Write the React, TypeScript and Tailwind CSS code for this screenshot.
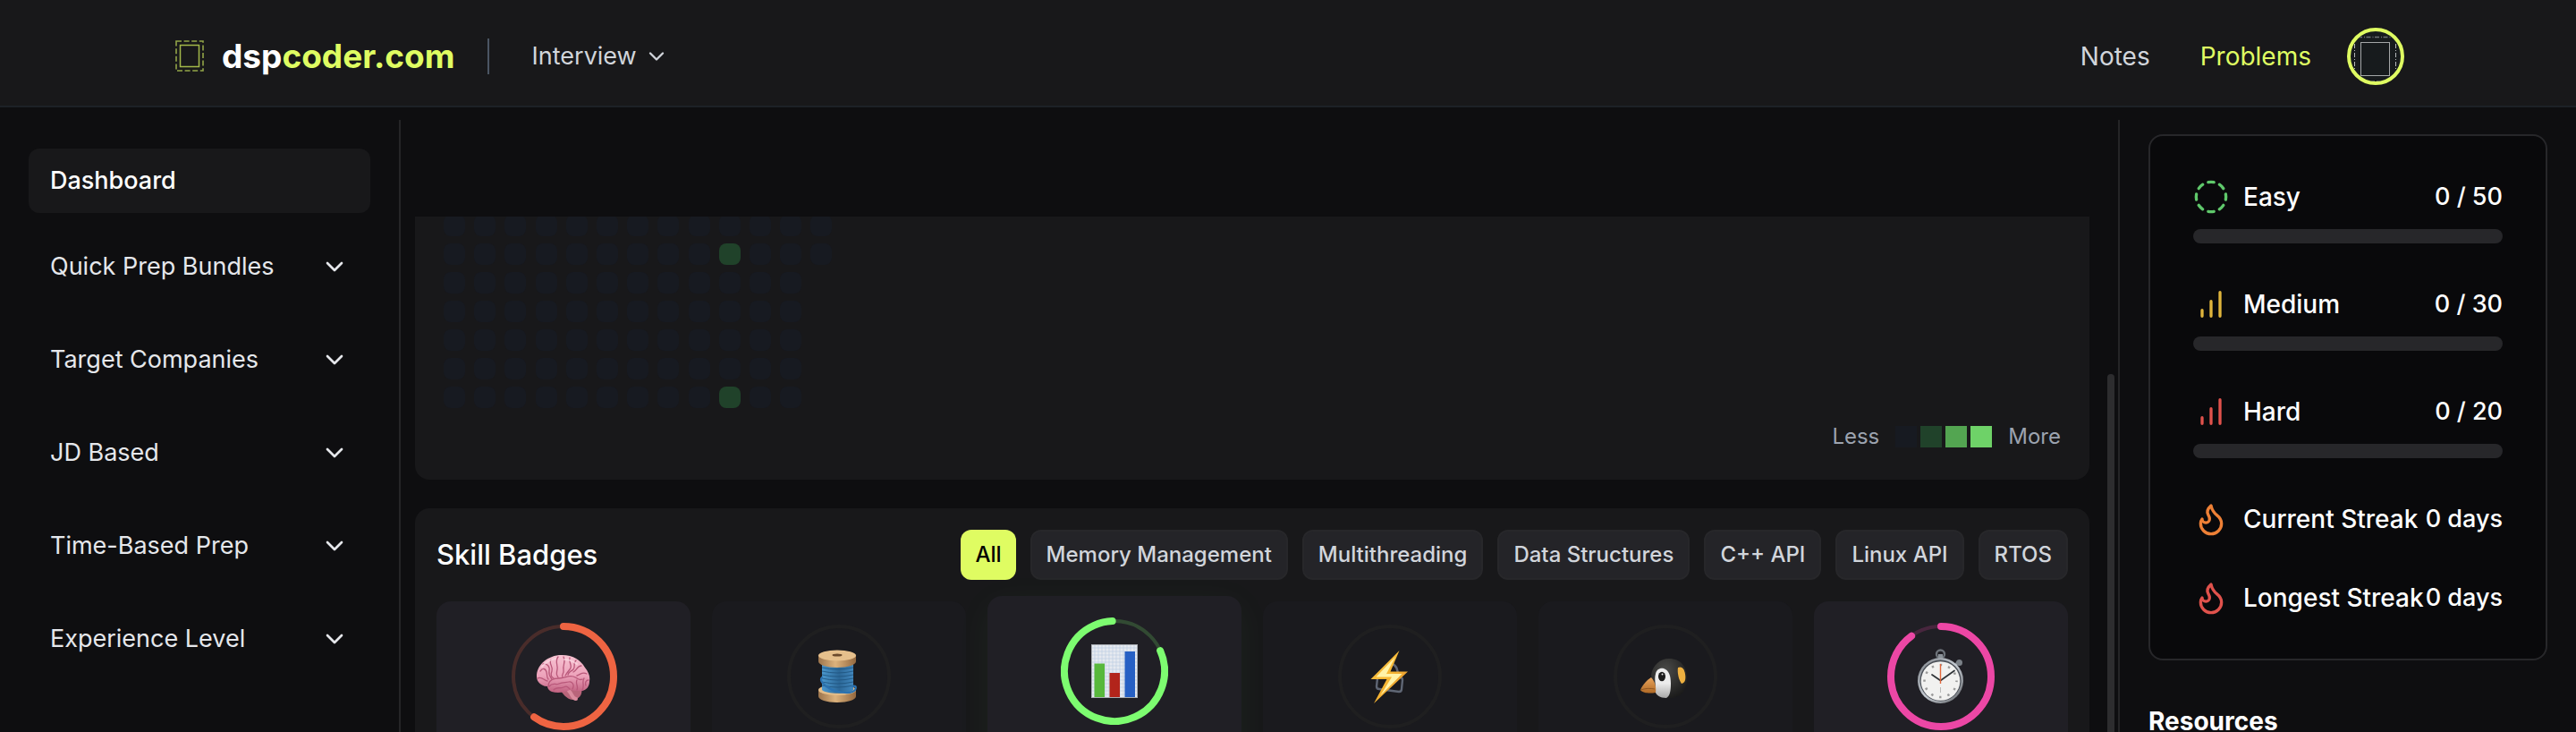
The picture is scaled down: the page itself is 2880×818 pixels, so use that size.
import type { ReactNode } from "react";

const navSections = [
  "Quick Prep Bundles",
  "Target Companies",
  "JD Based",
  "Time-Based Prep",
  "Experience Level",
];

const filters = [
  "All",
  "Memory Management",
  "Multithreading",
  "Data Structures",
  "C++ API",
  "Linux API",
  "RTOS",
];

function ChevronDown({ className }: { className: string }) {
  return (
    <svg viewBox="0 0 24 24" fill="none" stroke="currentColor" strokeWidth="2" strokeLinecap="round" strokeLinejoin="round" className={className} aria-hidden="true">
      <path d="m6 9 6 6 6-6" />
    </svg>
  );
}

function LogoMark() {
  return (
    <svg width="32" height="36" viewBox="0 0 32 36" fill="none" stroke="#a3b84a" aria-hidden="true">
      <rect x="1" y="1" width="30" height="33" strokeWidth="1.6" strokeDasharray="6 2.6" stroke="#93a548" />
      <rect x="5.5" y="5.5" width="21" height="24" strokeWidth="1.5" />
    </svg>
  );
}

function AvatarMark() {
  return (
    <svg viewBox="0 0 56 56" className="size-full" fill="none" aria-hidden="true">
      <path d="M8 6.5h40" stroke="#6f7376" strokeWidth="1.6" strokeDasharray="5 2 1 1.5" />
      <path d="M4.5 14v30M50.5 14v30" stroke="#b5b8ba" strokeWidth="1" strokeDasharray="5 2 1 2" />
      <path d="M22 55.5h13" stroke="#6f7376" strokeWidth="1" strokeDasharray="5 2" />
      <rect x="11.5" y="12.5" width="32" height="37" stroke="#a4a7a8" />
    </svg>
  );
}

function CircleDashed() {
  return (
    <svg viewBox="0 0 24 24" fill="none" stroke="currentColor" strokeWidth="2" strokeLinecap="round" strokeLinejoin="round" className="size-10 shrink-0 text-[#5fc86b]" aria-hidden="true">
      <path d="M10.1 2.182a10 10 0 0 1 3.8 0" />
      <path d="M13.9 21.818a10 10 0 0 1-3.8 0" />
      <path d="M17.609 3.721a10 10 0 0 1 2.69 2.7" />
      <path d="M2.182 13.9a10 10 0 0 1 0-3.8" />
      <path d="M20.279 17.609a10 10 0 0 1-2.7 2.69" />
      <path d="M21.818 10.1a10 10 0 0 1 0 3.8" />
      <path d="M3.721 6.391a10 10 0 0 1 2.7-2.69" />
      <path d="M6.391 20.279a10 10 0 0 1-2.69-2.7" />
    </svg>
  );
}

function Bars({ className }: { className: string }) {
  return (
    <svg viewBox="0 0 24 24" fill="none" stroke="currentColor" strokeWidth="2" strokeLinecap="round" className={className} aria-hidden="true">
      <path d="M6 20v-4M12 20V10M18 20V4" />
    </svg>
  );
}

function Flame({ className }: { className: string }) {
  return (
    <svg viewBox="0 0 24 24" fill="none" stroke="currentColor" strokeWidth="2" strokeLinecap="round" strokeLinejoin="round" className={className} aria-hidden="true">
      <path d="M8.5 14.5A2.5 2.5 0 0 0 11 12c0-1.38-.5-2-1-3-1.072-2.143-.224-4.054 2-6 .5 2.5 2 4.9 4 6.5 2 1.6 3 3.5 3 5.5a7 7 0 1 1-14 0c0-1.153.433-2.294 1-3a2.5 2.5 0 0 0 2.5 2.5z" />
    </svg>
  );
}

function Brain() {
  return (
    <g>
      <defs>
        <linearGradient id="brain" x1="0" y1="0" x2="0" y2="1">
          <stop offset="0" stopColor="#f7c3d2" />
          <stop offset="0.55" stopColor="#eda3bb" />
          <stop offset="1" stopColor="#c0607f" />
        </linearGradient>
      </defs>
      <path d="M55 73c4 6 8 12 15 13 7 0 12-6 10-13l-8-6z" fill="#b9657a" />
      <path d="M66 76c4 4 4 9 8 9" stroke="#da8c9e" strokeWidth="4" fill="none" strokeLinecap="round" />
      <path d="M30 60c0-12 10-22 25-24 15-1 24 5 29 14 4 5 6 10 5 15 0 6-3 10-8 11-6 1-10-1-14-1-6 3-14 4-20 2-3-1-5-4-5-6-7 0-12-5-12-11z" fill="url(#brain)" />
      <g fill="none" stroke="#b9587a" strokeWidth="1.3" strokeLinecap="round">
        <path d="M34 54c3-4 6-3 7 1s0 6 2 8M37 46c5-1 8 3 7 8s2 7 3 9M46 41c-3 5 3 8 1 13s0 7 2 8M54 38c-4 5 0 9-1 14s-1 6 1 9M60 38c3 6-1 9 0 14s-3 6-1 9M67 39c-2 6 4 8 0 13s-3 4-5 7M74 42c-4 3 0 7-3 10s-5 2-6 6M80 48c-5 0-5 5-9 7M86 57c-5-3-7 1-11 2M31 62c5-3 7 3 11 3" />
        <path d="M43 71c0-7 5-9 12-9s10-4 16-2 6 5 10 3M44 71c4-5 7-1 11-3s8-1 11-2 7 3 4 8M49 75c3-4 7-1 11-3s5 0 7 2M75 64c-2 4 2 7 0 11M83 62c-3 4 1 8-2 13M88 64c-3 0-4 3-3 6" />
      </g>
      <path d="M36 49c4-5 9-8 15-9M61 41c5 0 10 2 14 5" stroke="#fbdbe4" strokeWidth="2" fill="none" strokeLinecap="round" opacity="0.7" />
    </g>
  );
}

function Spool() {
  return (
    <g>
      <defs>
        <linearGradient id="wood" x1="0" y1="0" x2="1" y2="0">
          <stop offset="0" stopColor="#9c744c" />
          <stop offset="0.45" stopColor="#dcb27c" />
          <stop offset="1" stopColor="#94683f" />
        </linearGradient>
        <linearGradient id="thread" x1="0" y1="0" x2="1" y2="0">
          <stop offset="0" stopColor="#4a97cd" />
          <stop offset="0.55" stopColor="#2c6898" />
          <stop offset="1" stopColor="#4187bd" />
        </linearGradient>
      </defs>
      <path d="M37 76c0-4 9-7 21-7s21 3 21 7v6c0 4-9 7-21 7s-21-3-21-7z" fill="url(#wood)" />
      <ellipse cx="58" cy="75" rx="21" ry="6" fill="#e3bd89" />
      <path d="M41 40h35v35c-5 5-30 5-35 0z" fill="url(#thread)" />
      <g stroke="#1e527d" strokeWidth="1" fill="none" opacity="0.8">
        <path d="M41 46q17 4 35 0M41 50q17 4 35 0M41 54q17 4 35 0M41 58q17 4 35 0M41 62q17 4 35 0M41 66q17 4 35 0M41 70q17 4 35 0" />
      </g>
      <path d="M41 61c-3 3 1 8 8 12s24 8 29 2c2-4 0-5-3-4" stroke="#2b72b0" strokeWidth="2.2" fill="none" strokeLinecap="round" />
      <path d="M37 37v6c0 4 9 7 21 7s21-3 21-7v-6z" fill="url(#wood)" />
      <ellipse cx="58" cy="36.5" rx="21" ry="6" fill="#e6c08c" />
      <ellipse cx="58" cy="36" rx="5.5" ry="1.5" fill="#6b4a2c" />
    </g>
  );
}

function ChartGlyph() {
  return (
    <g>
      <rect x="34" y="30" width="52" height="60" fill="#e6eaf0" />
      <path
        d="M34 34h52M34 38h52M34 42h52M34 46h52M34 50h52M34 54h52M34 58h52M34 62h52M34 66h52M34 70h52M34 74h52M34 78h52M34 82h52M34 86h52M38 30v60M42 30v60M46 30v60M50 30v60M54 30v60M58 30v60M62 30v60M66 30v60M70 30v60M74 30v60M78 30v60M82 30v60"
        stroke="#bccde2"
        strokeWidth="0.7"
      />
      <rect x="37.5" y="51.5" width="11.5" height="38.5" fill="#58b83c" />
      <rect x="54.5" y="62" width="11.5" height="28" fill="#b2241b" />
      <rect x="71.5" y="38" width="11.5" height="52" fill="#2760c4" />
      <rect x="34.5" y="30.5" width="51" height="59" fill="none" stroke="#a9adb3" />
    </g>
  );
}

function Bolt() {
  return (
    <g>
      <defs>
        <linearGradient id="bolt" x1="0" y1="0" x2="1" y2="1">
          <stop offset="0" stopColor="#f6c145" />
          <stop offset="0.5" stopColor="#f7b733" />
          <stop offset="1" stopColor="#d9822b" />
        </linearGradient>
      </defs>
      <g fill="none" stroke="#5f6674" strokeWidth="2.4" strokeLinecap="round" strokeLinejoin="round">
        <path d="M48 59l23 2c2 0 3 1 3 3l-1 10c0 2-1 3-3 3l-22-3c-2 0-3-1-3-3l1-9c0-2 1-3 2-3z" />
        <path d="M53 58c1-8 4-13 9-12s7 5 7 14" />
      </g>
      <path d="M70.5 31L38.5 63h18L42 90l38-35.5H60.5z" fill="url(#bolt)" />
      <path d="M66 38L44.5 60.5h17.5L49.5 81 73.5 57H56z" fill="#fff3a8" />
    </g>
  );
}

function Penguin() {
  return (
    <g>
      <defs>
        <radialGradient id="pgHead" cx="0.4" cy="0.3" r="0.8">
          <stop offset="0" stopColor="#4b4b49" />
          <stop offset="0.6" stopColor="#2b2b2a" />
          <stop offset="1" stopColor="#171717" />
        </radialGradient>
        <linearGradient id="pgBeak" x1="0" y1="0" x2="0" y2="1">
          <stop offset="0" stopColor="#e9a45c" />
          <stop offset="1" stopColor="#b06a26" />
        </linearGradient>
        <linearGradient id="pgFace" x1="0" y1="0" x2="0" y2="1">
          <stop offset="0.5" stopColor="#ececec" />
          <stop offset="1" stopColor="#a9a9a9" />
        </linearGradient>
      </defs>
      <path d="M44 58c2-11 10-18 20-18 13 0 20 9 20 22 0 13-6 21-17 22-15 0-22-9-23-26z" fill="url(#pgHead)" />
      <path d="M49 57c1-5 5-7 9-6 6 2 8 8 8 17 0 8-1 14-5 16-7 0-12-3-13-9 2-6-1-11 1-18z" fill="url(#pgFace)" />
      <path d="M44 61c-5 3-10 9-12 14 3 4 11 4 17 3 1-6-1-13-5-17z" fill="url(#pgBeak)" />
      <path d="M32 75c6-2 11-2 16-1" stroke="#8b5420" strokeWidth="0.9" fill="none" />
      <ellipse cx="56" cy="60" rx="4" ry="5.2" fill="#1c1c1c" />
      <circle cx="56.5" cy="57.5" r="1" fill="#e7e7e7" />
      <path d="M74 50c4-2 7 1 8 7s0 10-4 11c-3-4-5-12-4-18z" fill="#eeb040" />
    </g>
  );
}

function Stopwatch() {
  return (
    <g>
      <defs>
        <linearGradient id="swRim" x1="0" y1="0" x2="1" y2="1">
          <stop offset="0" stopColor="#7b8087" />
          <stop offset="0.5" stopColor="#c5cbd2" />
          <stop offset="1" stopColor="#5e6166" />
        </linearGradient>
      </defs>
      <circle cx="59.5" cy="35" r="4.5" fill="none" stroke="#6d737a" strokeWidth="2.4" />
      <rect x="57" y="35" width="5" height="6" fill="#8b9299" />
      <path d="M76 47l3-3" stroke="#7b8188" strokeWidth="3" />
      <circle cx="80.5" cy="44.5" r="3.5" fill="#7b8188" />
      <circle cx="59.5" cy="64.5" r="25.5" fill="url(#swRim)" />
      <circle cx="59.5" cy="64.5" r="23" fill="#4a4f57" />
      <circle cx="59.5" cy="65" r="21.8" fill="#f1f1f0" />
      <circle cx="59.5" cy="65" r="18" fill="none" stroke="#9a9a9a" strokeWidth="2.5" strokeDasharray="2.4 7.025" strokeDashoffset="1.2" />
      <path d="M59.5 72v6M59.5 54v3" stroke="#b9b9b9" strokeWidth="1" />
      <path d="M59.5 64.5L50 58M59.5 64.5L75 53.5" stroke="#2f3338" strokeWidth="1.7" strokeLinecap="round" />
      <path d="M59.5 68V46" stroke="#e2683c" strokeWidth="1.4" />
    </g>
  );
}

type Badge = {
  name: string;
  glyph: ReactNode;
  color?: string;
  percent?: number;
  start?: number;
  raised?: boolean;
};

const badges: Badge[] = [
  { name: "Brain", glyph: <Brain />, color: "#ee6442", percent: 60, start: 0 },
  { name: "Thread spool", glyph: <Spool /> },
  { name: "Bar chart", glyph: <ChartGlyph />, color: "#7dfc70", percent: 81, start: 66, raised: true },
  { name: "Lightning", glyph: <Bolt /> },
  { name: "Penguin", glyph: <Penguin /> },
  { name: "Stopwatch", glyph: <Stopwatch />, color: "#ec47a5", percent: 90, start: 0 },
];

function BadgeCard({ badge }: { badge: Badge }) {
  const tone = badge.raised
    ? "-mt-1.5 bg-[#201f25] shadow-[0_8px_40px_rgba(125,252,112,0.05)]"
    : badge.color
      ? "bg-[#201f25]"
      : "bg-[#1a1a1e]";
  return (
    <li className={`flex h-72 flex-col items-center rounded-2xl p-6 ${tone}`}>
      <svg viewBox="0 0 120 120" className="size-[120px]" role="img" aria-label={badge.name}>
        <circle cx="60" cy="60" r="56" fill="none" stroke={badge.color ?? "#1f1f20"} strokeOpacity={badge.color ? 0.2 : 1} strokeWidth="4" />
        {badge.color && (
          <circle
            cx="60"
            cy="60"
            r="56"
            fill="none"
            stroke={badge.color}
            strokeWidth="8"
            strokeLinecap="round"
            pathLength="100"
            strokeDasharray={`${badge.percent} 100`}
            transform={`rotate(${(badge.start ?? 0) - 90} 60 60)`}
          />
        )}
        {badge.glyph}
      </svg>
    </li>
  );
}

function Heatmap() {
  const rows = [13, 13, 12, 12, 12, 12, 12];
  return (
    <div className="-mt-0.5 flex flex-col gap-2">
      {rows.map((count, r) => (
        <div key={r} className="grid grid-cols-[repeat(53,minmax(0,1fr))] gap-x-1">
          {Array.from({ length: count }, (_, c) => (
            <span
              key={c}
              className={`size-6 rounded-lg ${c === 9 && (r === 1 || r === 6) ? "bg-[#20422a]" : "bg-[#171a21]"}`}
            />
          ))}
        </div>
      ))}
    </div>
  );
}

function StatRow({ icon, label, value }: { icon: ReactNode; label: string; value: string }) {
  return (
    <div className="flex h-10 items-center justify-between whitespace-nowrap">
      <span className="flex items-center gap-4">
        {icon}
        {label}
      </span>
      <span className="text-[27px]">{value}</span>
    </div>
  );
}

function ProgressStat({ icon, label, value }: { icon: ReactNode; label: string; value: string }) {
  return (
    <div className="flex flex-col gap-4">
      <StatRow icon={icon} label={label} value={value} />
      <div role="progressbar" aria-label={label} aria-valuenow={0} className="h-4 rounded-full bg-[#27272a]" />
    </div>
  );
}

export default function App() {
  return (
    <div className="flex h-screen flex-col overflow-hidden bg-[#0e0e10] font-['Inter','Liberation_Sans',sans-serif] text-[28px] leading-10 text-white">
      <header className="flex h-30 shrink-0 items-center justify-between border-b-2 border-[#1d2127] bg-[#18181a] px-48">
        <div className="flex items-center pt-2">
          <a href="#" className="flex items-center gap-5 pl-1 text-[37px] font-bold">
            <LogoMark />
            <span>
              dsp<span className="text-[#dffc62]">coder.com</span>
            </span>
          </a>
          <span className="ml-9 h-10 w-0.5 bg-[#4b5563]" />
          <button type="button" className="ml-12 flex items-center gap-2 text-[27px] text-[#d1d5db]">
            Interview
            <ChevronDown className="size-7" />
          </button>
        </div>
        <nav className="flex items-center pt-2">
          <a href="#" className="text-[#d1d5db]">Notes</a>
          <a href="#" className="ml-14 text-[#dffc62]">Problems</a>
          <button type="button" aria-label="Account" className="ml-10 size-16 overflow-hidden rounded-full border-4 border-[#dffc62] bg-[#171b1d]">
            <AvatarMark />
          </button>
        </nav>
      </header>

      <div className="flex min-h-0 flex-1 pt-3.5">
        <aside className="w-[448px] shrink-0 border-r-2 border-[#252527] p-8">
          <nav className="flex flex-col gap-6">
            <a href="#" className="flex h-18 items-center rounded-xl bg-[#18181a] px-6 text-[27px] font-medium">
              Dashboard
            </a>
            <div className="flex flex-col gap-8">
              {navSections.map((label) => (
                <button key={label} type="button" className="flex h-18 items-center justify-between px-6 text-[27px] text-[#e5e7eb]">
                  {label}
                  <ChevronDown className="size-8" />
                </button>
              ))}
            </div>
          </nav>
        </aside>

        <main className="relative min-w-0 flex-1 overflow-hidden pt-27 pr-8 pl-4">
          <section className="h-[294px] overflow-hidden rounded-b-2xl bg-[#18181a] px-8">
            <Heatmap />
            <div className="flex items-center justify-end gap-[18px] pt-3 text-2xl leading-10 text-[#9ca3af]">
              <span>Less</span>
              <span className="flex gap-1">
                <span className="size-6 bg-[#171a21]" />
                <span className="size-6 bg-[#20422a]" />
                <span className="size-6 bg-[#53a551]" />
                <span className="size-6 bg-[#6ed268]" />
              </span>
              <span>More</span>
            </div>
          </section>

          <section className="mt-8 rounded-2xl bg-[#18181a] p-6">
            <div className="flex items-center justify-between">
              <h2 className="text-[31px] font-medium">Skill Badges</h2>
              <div className="flex gap-4">
                {filters.map((label, i) => (
                  <button
                    key={label}
                    type="button"
                    className={
                      i === 0
                        ? "h-14 rounded-xl bg-[#dffc62] px-4 text-2xl font-medium text-black"
                        : "h-14 rounded-xl border-2 border-[#27272a] bg-[#242428] px-4 text-2xl font-medium text-[#d1d5db]"
                    }
                  >
                    {label}
                  </button>
                ))}
              </div>
            </div>
            <ul className="mt-6 grid grid-cols-6 gap-6">
              {badges.map((badge) => (
                <BadgeCard key={badge.name} badge={badge} />
              ))}
            </ul>
          </section>
          <div className="absolute top-[284px] right-1 bottom-0 w-2 rounded-t-full bg-[#2d2d2f]" />
        </main>

        <aside className="w-[512px] shrink-0 overflow-hidden border-l-2 border-[#252527] px-8 pt-4">
          <section className="flex flex-col gap-12 rounded-2xl border-2 border-[#27272a] bg-[#09090b] p-12 font-medium">
            <ProgressStat icon={<CircleDashed />} label="Easy" value="0 / 50" />
            <ProgressStat icon={<Bars className="size-10 text-[#dfb43c]" />} label="Medium" value="0 / 30" />
            <ProgressStat icon={<Bars className="size-10 text-[#e0524c]" />} label="Hard" value="0 / 20" />
            <StatRow icon={<Flame className="size-10 text-[#ee8036]" />} label="Current Streak" value="0 days" />
            <StatRow icon={<Flame className="size-10 text-[#e0524c]" />} label="Longest Streak" value="0 days" />
          </section>
          <h2 className="mt-14 leading-6 font-bold">Resources</h2>
        </aside>
      </div>
    </div>
  );
}
